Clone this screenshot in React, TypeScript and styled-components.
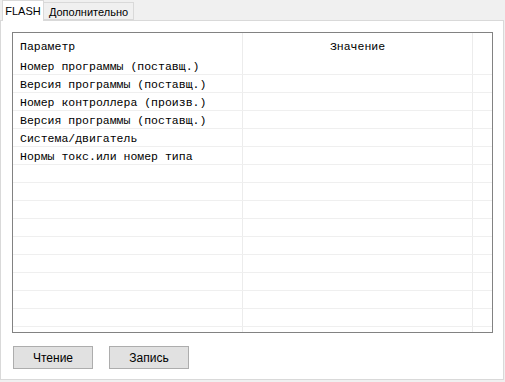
import React, { FC } from "react";
import styled, { createGlobalStyle } from "styled-components";

const GlobalStyle = createGlobalStyle`
  html, body {
    margin: 0;
    padding: 0;
    background: #f0f0f0;
  }
`;

const params = [
  "Номер программы (поставщ.)",
  "Версия программы (поставщ.)",
  "Номер контроллера (произв.)",
  "Версия программы (поставщ.)",
  "Система/двигатель",
  "Нормы токс.или номер типа",
];

const TOTAL_ROWS = 16;

const App: FC = () => {
  const rows = Array.from({ length: TOTAL_ROWS }, (_, i) => params[i] || "");

  return (
    <Window>
      <GlobalStyle />
      <TabStrip>
        <Tab active>FLASH</Tab>
        <Tab>Дополнительно</Tab>
      </TabStrip>
      <Panel>
        <Table>
          <HeaderRow>
            <HeadCell>Параметр</HeadCell>
            <HeadCell center>Значение</HeadCell>
            <HeadCell />
          </HeaderRow>
          {rows.map((p, i) => (
            <Row key={i}>
              <Cell>{p}</Cell>
              <Cell />
              <Cell />
            </Row>
          ))}
        </Table>
        <Buttons>
          <Button>Чтение</Button>
          <Button>Запись</Button>
        </Buttons>
      </Panel>
    </Window>
  );
};

export default App;

const uiFont = `"Liberation Sans", Arial, sans-serif`;
const monoFont = `"Liberation Mono", "Courier New", monospace`;

const Window = styled.div`
  width: 505px;
  height: 382px;
  background: #f0f0f0;
  display: flex;
  flex-direction: column;
  overflow: hidden;
`;

const TabStrip = styled.div`
  display: flex;
  align-items: flex-end;
  height: 21px;
  padding-left: 2px;
  position: relative;
  z-index: 1;
`;

const Tab = styled.div<{ active?: boolean }>`
  box-sizing: border-box;
  display: flex;
  justify-content: center;
  height: ${(p) => (p.active ? 21 : 18)}px;
  margin-bottom: ${(p) => (p.active ? 0 : 1)}px;
  padding-top: ${(p) => (p.active ? 3 : 2)}px;
  width: ${(p) => (p.active ? 42 : 90)}px;
  background: ${(p) => (p.active ? "#ffffff" : "#f0f0f0")};
  border: 1px solid #d9d9d9;
  border-bottom: ${(p) => (p.active ? "none" : "1px solid #d9d9d9")};
  ${(p) => (p.active ? "" : "border-left: none;")}
  font-family: ${uiFont};
  font-size: 11px;
  line-height: 14px;
  color: #000;
  white-space: nowrap;
`;

const Panel = styled.div`
  box-sizing: border-box;
  width: 504px;
  height: 360px;
  margin-top: -1px;
  background: #ffffff;
  border: 1px solid #d9d9d9;
  padding: 11px 0 0 11px;
  display: flex;
  flex-direction: column;
`;

const Table = styled.div`
  box-sizing: border-box;
  width: 481px;
  height: 301px;
  border: 1px solid #828282;
  overflow: hidden;
  background: #fff;
`;

const columns = "230px 230px 1fr";

const HeaderRow = styled.div`
  display: grid;
  grid-template-columns: ${columns};
  height: 24px;
`;

const HeadCell = styled.div<{ center?: boolean }>`
  font-family: ${monoFont};
  font-size: 11.5px;
  color: #000;
  display: flex;
  align-items: center;
  justify-content: ${(p) => (p.center ? "center" : "flex-start")};
  padding-left: ${(p) => (p.center ? 0 : 7)}px;
  padding-top: 2px;
  border-right: 1px solid #ececec;
  &:last-child {
    border-right: none;
  }
`;

const Row = styled.div`
  box-sizing: border-box;
  display: grid;
  grid-template-columns: ${columns};
  height: 18px;
  border-bottom: 1px solid #efefef;
`;

const Cell = styled.div`
  font-family: ${monoFont};
  font-size: 11.5px;
  line-height: 17px;
  padding-top: 1px;
  color: #000;
  padding-left: 7px;
  white-space: nowrap;
  overflow: hidden;
  border-right: 1px solid #ececec;
  &:last-child {
    border-right: none;
  }
`;

const Buttons = styled.div`
  display: flex;
  gap: 16px;
  margin-top: 13px;
  padding-left: 1px;
`;

const Button = styled.button`
  box-sizing: border-box;
  width: 80px;
  height: 23px;
  background: #e1e1e1;
  border: 1px solid #adadad;
  border-radius: 0;
  padding: 0;
  font-family: ${uiFont};
  font-size: 12px;
  color: #000;
`;
